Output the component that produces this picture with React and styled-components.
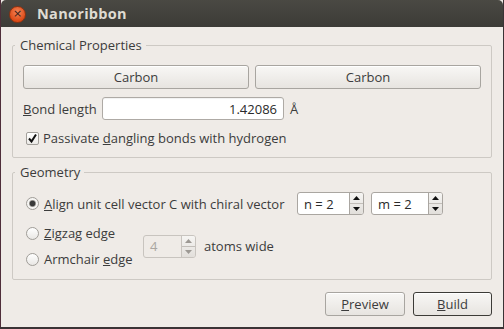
import React from 'react'
import styled, { createGlobalStyle } from 'styled-components'

const GlobalStyle = createGlobalStyle`
  html, body {
    margin: 0;
    padding: 0;
    background: #2e2a2c;
  }
  body {
    font-family: 'Open Sans', 'Noto Sans', 'DejaVu Sans', sans-serif;
    font-size: 13px;
    color: #3c3c3c;
  }
`

const App = () => {
  return (
    <>
      <GlobalStyle />
      <Screen>
        <Window>
          <TitleBar>
            <CloseButton>×</CloseButton>
            <Title>Nanoribbon</Title>
          </TitleBar>
          <Body>
            <Group>
              <Legend>Chemical Properties</Legend>
              <ElementRow>
                <PushButton>Carbon</PushButton>
                <PushButton>Carbon</PushButton>
              </ElementRow>
              <FieldRow>
                <FieldLabel><u>B</u>ond length</FieldLabel>
                <LineEdit>1.42086</LineEdit>
                <Unit>Å</Unit>
              </FieldRow>
              <CheckRow>
                <CheckBox checked>
                  <svg width="11" height="11" viewBox="0 0 11 11">
                    <path d="M2 5.5 L4.5 8.5 L9 1.5" fill="none" stroke="#111" strokeWidth="2" />
                  </svg>
                </CheckBox>
                <span>Passivate <u>d</u>angling bonds with hydrogen</span>
              </CheckRow>
            </Group>

            <Group $top={6} $bottom={7}>
              <Legend>Geometry</Legend>
              <GeometryGrid>
                <OptionRow>
                  <Radio checked />
                  <span><u>A</u>lign unit cell vector C with chiral vector</span>
                </OptionRow>
                <SpinPair>
                  <SpinBox value="n = 2" width={67} />
                  <SpinBox value="m = 2" width={72} />
                </SpinPair>
                <OptionRow $shift={5}>
                  <Radio />
                  <span><u>Z</u>igzag edge</span>
                </OptionRow>
                <WidthCell>
                  <SpinBox value="4" width={53} disabled />
                  <span>atoms wide</span>
                </WidthCell>
                <OptionRow>
                  <Radio />
                  <span>Armchair <u>e</u>dge</span>
                </OptionRow>
              </GeometryGrid>
            </Group>

            <ButtonBar>
              <DialogButton><u>P</u>review</DialogButton>
              <DialogButton $default><u>B</u>uild</DialogButton>
            </ButtonBar>
          </Body>
        </Window>
      </Screen>
    </>
  )
}

const SpinBox = ({ value, width, disabled }) => (
  <SpinFrame style={{ width }} $disabled={disabled}>
    <SpinText $disabled={disabled}>{value}</SpinText>
    <SpinArrows $disabled={disabled}>
      <SpinArrow $disabled={disabled}>
        <svg width="7" height="4" viewBox="0 0 7 4"><path d="M0 4 L3.5 0 L7 4 Z" /></svg>
      </SpinArrow>
      <SpinArrow $disabled={disabled}>
        <svg width="7" height="4" viewBox="0 0 7 4"><path d="M0 0 L3.5 4 L7 0 Z" /></svg>
      </SpinArrow>
    </SpinArrows>
  </SpinFrame>
)

export default App

const Screen = styled.div`
  width: 504px;
  height: 329px;
  background: #3a3335;
  overflow: hidden;
`

const Window = styled.div`
  width: 502px;
  height: 327px;
  border-left: 1px solid #4f2e3a;
  background: #efebe7;
  display: flex;
  flex-direction: column;
`

const TitleBar = styled.div`
  height: 27px;
  flex: none;
  display: flex;
  align-items: center;
  padding-left: 8px;
  border-radius: 5px 5px 0 0;
  background: linear-gradient(#4a4943, #3c3b37);
  box-sizing: border-box;
`

const CloseButton = styled.div`
  width: 17px;
  height: 17px;
  border-radius: 50%;
  margin-top: 2px;
  background: radial-gradient(circle at 50% 35%, #f4875a, #dd4a17 70%);
  border: 1px solid #8e3210;
  box-sizing: border-box;
  color: #3a2018;
  font-family: 'DejaVu Sans', sans-serif;
  font-size: 11px;
  line-height: 14px;
  text-align: center;
`

const Title = styled.div`
  margin-left: 11px;
  color: #dfdbd2;
  font-weight: 700;
  font-size: 14.5px;
  letter-spacing: 0.3px;
`

const Body = styled.div`
  padding: 10px 11px 0;
  display: flex;
  flex-direction: column;
`

const Group = styled.fieldset`
  margin: ${p => p.$top || 0}px 0 0;
  padding: 12px 10px ${p => p.$bottom ?? 10}px 10px;
  border: 1px solid #cdc9c4;
  border-radius: 2px;
  min-width: 0;
`

const Legend = styled.legend`
  margin-left: -8px;
  padding: 0 4px 0 5px;
  line-height: 16px;
  color: #3c3c3c;
`

const ElementRow = styled.div`
  display: grid;
  grid-template-columns: 1fr 1fr;
  gap: 6px;
`

const PushButton = styled.div`
  height: 24px;
  box-sizing: border-box;
  display: flex;
  align-items: center;
  justify-content: center;
  border: 1px solid #a8a5a0;
  border-radius: 3px;
  background: linear-gradient(#f8f7f5, #e7e4e0);
  box-shadow: inset 0 1px 0 #ffffff;
`

const FieldRow = styled.div`
  margin-top: 8px;
  display: flex;
  align-items: center;
`

const FieldLabel = styled.span`
  width: 79px;
  flex: none;
`

const LineEdit = styled.div`
  width: 182px;
  height: 23px;
  box-sizing: border-box;
  border: 1px solid #aeaaa5;
  border-radius: 3px;
  background: #ffffff;
  box-shadow: inset 0 1px 1px rgba(0, 0, 0, 0.06);
  display: flex;
  align-items: center;
  justify-content: flex-end;
  padding-right: 6px;
  color: #2a2a2a;
`

const Unit = styled.span`
  margin-left: 6px;
`

const CheckRow = styled.div`
  margin-top: 9px;
  height: 18px;
  display: flex;
  align-items: center;
  gap: 4px;
  padding-left: 3px;
`

const CheckBox = styled.span`
  width: 13px;
  height: 13px;
  box-sizing: border-box;
  border: 1px solid #a29f9a;
  border-radius: 2px;
  background: linear-gradient(#ffffff, #ebe9e6);
  display: flex;
  align-items: center;
  justify-content: center;
`

const GeometryGrid = styled.div`
  display: grid;
  grid-template-columns: 120px auto;
  grid-template-rows: 23px 31px 26px;
`

const OptionRow = styled.div`
  display: flex;
  align-items: center;
  gap: 5px;
  padding-left: 3px;
  padding-top: ${p => p.$shift || 0}px;
  white-space: nowrap;
`

const Radio = styled.span`
  width: 13px;
  height: 13px;
  flex: none;
  box-sizing: border-box;
  border-radius: 50%;
  border: 1px solid #a09d98;
  background: ${p => p.checked
    ? 'radial-gradient(circle, #3a3a3a 0 2.5px, #8d8a86 3px, #f6f5f3 4px)'
    : 'linear-gradient(#ffffff, #e9e7e4)'};
`

const SpinPair = styled.div`
  display: flex;
  gap: 7px;
  padding-left: 154px;
`

const WidthCell = styled.div`
  grid-row: 2 / span 2;
  grid-column: 2;
  display: flex;
  align-items: center;
  gap: 8px;
  margin-top: 5px;
`

const SpinFrame = styled.div`
  height: 23px;
  box-sizing: border-box;
  display: flex;
  border: 1px solid ${p => p.$disabled ? '#c8c4bf' : '#aaa6a1'};
  border-radius: 3px;
  background: ${p => p.$disabled ? '#efebe7' : '#ffffff'};
  overflow: hidden;
`

const SpinText = styled.div`
  flex: 1;
  display: flex;
  align-items: center;
  padding-left: 6px;
  color: ${p => p.$disabled ? '#aaa6a1' : '#2a2a2a'};
`

const SpinArrows = styled.div`
  width: 13px;
  display: flex;
  flex-direction: column;
  border-left: 1px solid ${p => p.$disabled ? '#c8c4bf' : '#aaa6a1'};
  background: linear-gradient(#f6f5f3, #e2dfdb);
`

const SpinArrow = styled.div`
  flex: 1;
  display: flex;
  align-items: center;
  justify-content: center;
  svg { fill: ${p => p.$disabled ? '#9d9994' : '#111111'}; }
  & + & { border-top: 1px solid #c2beb9; }
`

const ButtonBar = styled.div`
  margin-top: 12px;
  display: flex;
  justify-content: flex-end;
  gap: 8px;
`

const DialogButton = styled.div`
  width: ${p => p.$default ? 79 : 80}px;
  height: 24px;
  box-sizing: border-box;
  display: flex;
  align-items: center;
  justify-content: center;
  border: 1px solid ${p => p.$default ? '#3c3b37' : '#a8a5a0'};
  border-radius: 3px;
  background: linear-gradient(#f8f7f5, #e7e4e0);
  box-shadow: inset 0 1px 0 #ffffff;
`
